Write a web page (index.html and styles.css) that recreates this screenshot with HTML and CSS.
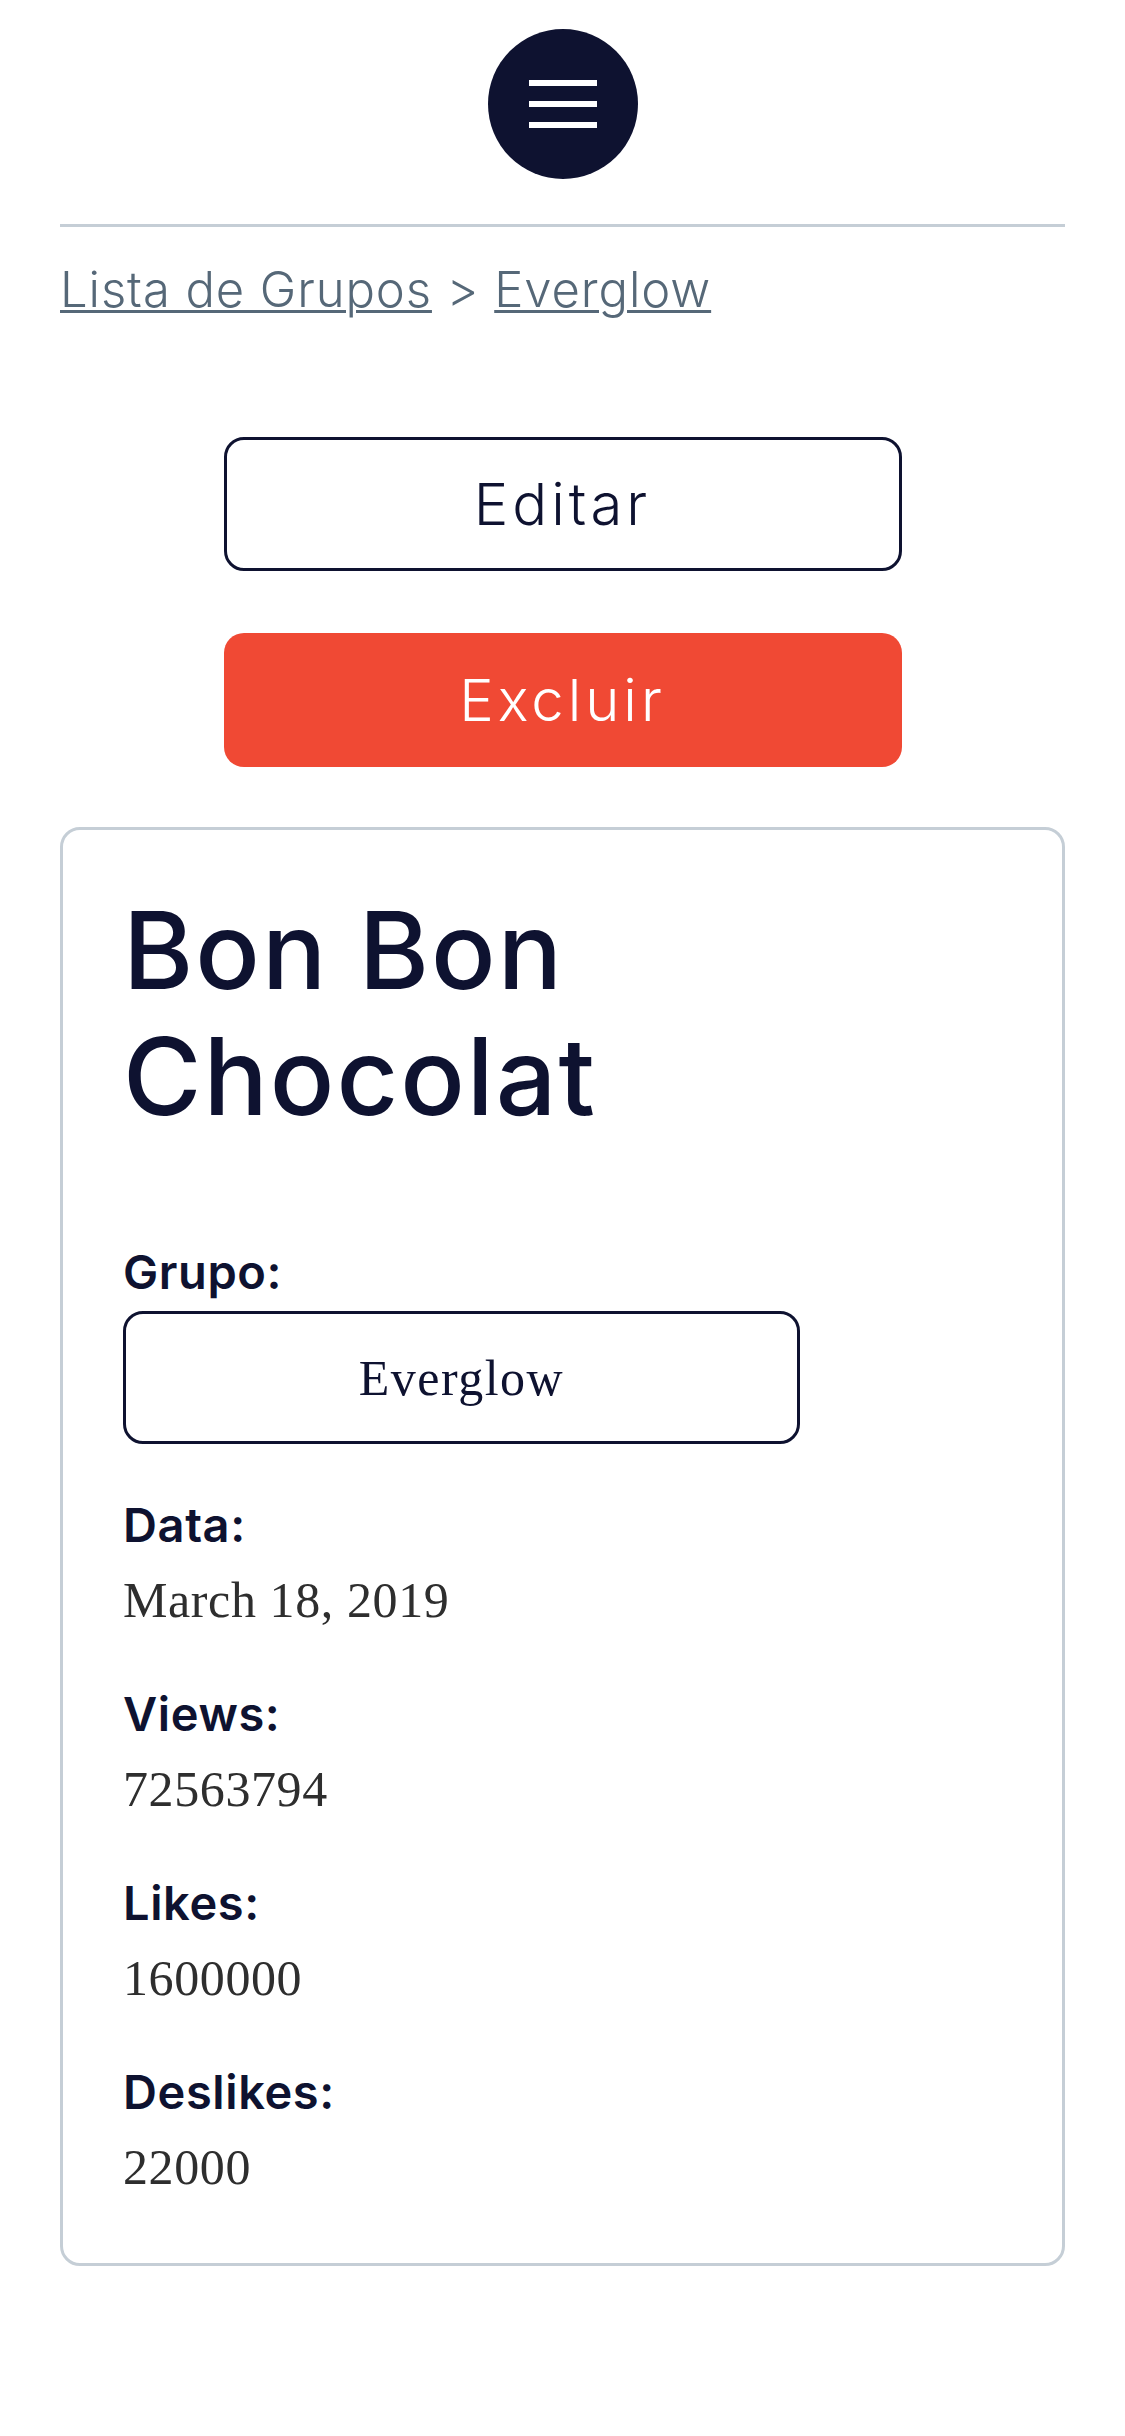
FILE: index.html
```html
<!DOCTYPE html>
<html lang="pt">
<head>
<meta charset="utf-8">
<title>Bon Bon Chocolat</title>
<link rel="stylesheet" href="styles.css">
</head>
<body>
<header class="top">
  <button class="menu-btn" aria-label="Menu">
    <span class="bar"></span>
    <span class="bar"></span>
    <span class="bar"></span>
  </button>
</header>
<main class="page">
  <hr class="divider">
  <nav class="crumbs">
    <a href="#" class="crumb-link">Lista de Grupos</a> &gt; <a href="#" class="crumb-link">Everglow</a>
  </nav>
  <div class="actions">
    <button class="btn btn-outline">Editar</button>
    <button class="btn btn-danger">Excluir</button>
  </div>
  <section class="card">
    <h1 class="title">Bon Bon Chocolat</h1>
    <div class="field field-first">
      <div class="label">Grupo:</div>
      <div class="group-box">Everglow</div>
    </div>
    <div class="field">
      <div class="label">Data:</div>
      <div class="value">March 18, 2019</div>
    </div>
    <div class="field">
      <div class="label">Views:</div>
      <div class="value">72563794</div>
    </div>
    <div class="field">
      <div class="label">Likes:</div>
      <div class="value">1600000</div>
    </div>
    <div class="field">
      <div class="label">Deslikes:</div>
      <div class="value">22000</div>
    </div>
  </section>
</main>
</body>
</html>
```

FILE: styles.css
```css
* { box-sizing: border-box; }

html, body {
  margin: 0;
  padding: 0;
  background: #ffffff;
}

body {
  font-family: "Inter", "DejaVu Sans", sans-serif;
  color: #0e1230;
}

.top {
  display: flex;
  justify-content: center;
  padding-top: 29px;
}

.menu-btn {
  width: 150px;
  height: 150px;
  border-radius: 50%;
  border: none;
  background: #0e1230;
  display: flex;
  flex-direction: column;
  align-items: center;
  justify-content: center;
  gap: 15px;
  padding: 0;
  margin-left: 1px;
}

.bar {
  display: block;
  width: 68px;
  height: 6px;
  background: #ffffff;
}

.page {
  margin: 0 60px;
}

.divider {
  border: none;
  height: 3px;
  background: #c5ced6;
  margin: 45px 0 0;
}

.crumbs {
  margin-top: 33px;
  font-size: 49px;
  line-height: 60px;
  font-weight: 300;
  letter-spacing: 0.9px;
  color: #566878;
}

.crumb-link {
  color: #566878;
  text-decoration: underline;
  text-decoration-thickness: 3px;
  text-underline-offset: 3px;
}

.actions {
  display: flex;
  flex-direction: column;
  align-items: center;
  gap: 62px;
  margin-top: 117px;
}

.btn {
  width: 678px;
  height: 134px;
  border-radius: 20px;
  font-family: "Inter", "DejaVu Sans", sans-serif;
  font-size: 58px;
  font-weight: 300;
  letter-spacing: 4px;
  display: flex;
  align-items: center;
  justify-content: center;
  padding: 0;
}

.btn-outline {
  background: #ffffff;
  border: 3px solid #0e1230;
  color: #0e1230;
}

.btn-danger {
  background: #f04934;
  border: none;
  color: #ffffff;
}

.card {
  margin-top: 60px;
  border: 3px solid #c5ced6;
  border-radius: 20px;
  padding: 57px 60px 66px;
}

.title {
  margin: 0;
  font-size: 107px;
  line-height: 126px;
  font-weight: 500;
  letter-spacing: 2px;
  color: #0e1230;
  max-width: 600px;
}

.field-first {
  margin-top: 103px;
}

.label {
  font-size: 47px;
  line-height: 60px;
  font-weight: 600;
  letter-spacing: 0.6px;
  color: #0e1230;
}

.field-first .label {
  margin-bottom: 9px;
}

.value {
  margin-top: 15px;
  font-family: "Liberation Serif", "DejaVu Serif", serif;
  font-size: 50px;
  line-height: 60px;
  letter-spacing: 0.6px;
  color: #2e2e2e;
}

.field + .field {
  margin-top: 54px;
}

.field-first + .field {
  margin-top: 51px;
}

.group-box {
  width: 677px;
  height: 133px;
  border: 3px solid #0e1230;
  border-radius: 20px;
  display: flex;
  align-items: center;
  justify-content: center;
  font-family: "Liberation Serif", "DejaVu Serif", serif;
  font-size: 50px;
  letter-spacing: 1.5px;
  color: #0e1230;
}
```
